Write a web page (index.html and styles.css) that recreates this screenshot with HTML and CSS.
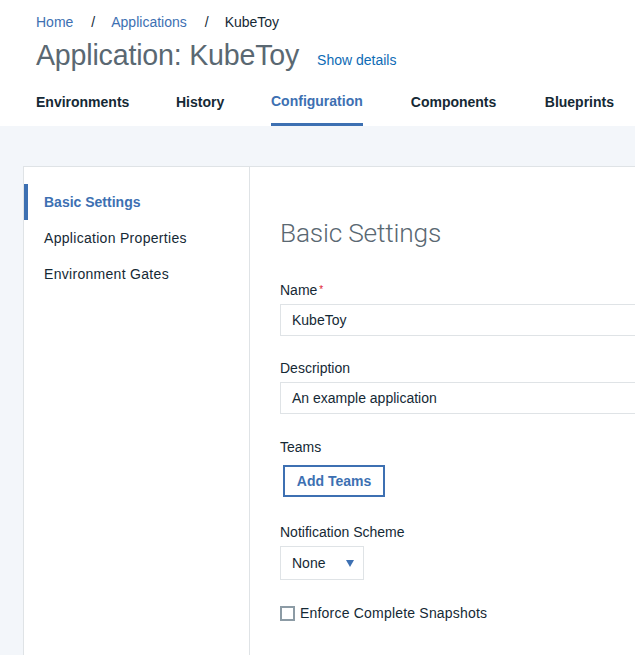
FILE: index.html
```html
<!DOCTYPE html>
<html>
<head>
<meta charset="utf-8">
<link rel="stylesheet" href="styles.css">
</head>
<body>
<header class="header">
  <nav class="crumbs">
    <a class="crumb-link">Home</a><span class="sep">/</span><a class="crumb-link">Applications</a><span class="sep">/</span><span class="crumb-current">KubeToy</span>
  </nav>
  <div class="title-row">
    <h1 class="title">Application: KubeToy</h1>
    <a class="details">Show details</a>
  </div>
  <div class="tabs">
    <span class="tab t1">Environments</span>
    <span class="tab t2">History</span>
    <span class="tab t3 active">Configuration</span>
    <span class="tab t4">Components</span>
    <span class="tab t5">Blueprints</span>
  </div>
</header>
<main class="main">
  <div class="card">
    <aside class="side">
      <div class="side-item active">Basic Settings</div>
      <div class="side-item">Application Properties</div>
      <div class="side-item">Environment Gates</div>
    </aside>
    <section class="content">
      <h2 class="heading">Basic Settings</h2>
      <div class="field">
        <label class="label">Name<span class="req">*</span></label>
        <div class="input">KubeToy</div>
      </div>
      <div class="field">
        <label class="label">Description</label>
        <div class="input">An example application</div>
      </div>
      <div class="field">
        <label class="label">Teams</label>
        <button class="btn">Add Teams</button>
      </div>
      <div class="field">
        <label class="label">Notification Scheme</label>
        <div class="select">None<span class="arrow"></span></div>
      </div>
      <div class="check-row">
        <span class="box"></span><span class="check-label">Enforce Complete Snapshots</span>
      </div>
    </section>
  </div>
</main>
</body>
</html>
```
FILE: styles.css
```css
* { box-sizing: border-box; }
html, body { margin: 0; padding: 0; }
body {
  font-family: "Liberation Sans", Arial, sans-serif;
  color: #152935;
  background: #f3f6fa;
  width: 635px;
  height: 655px;
  overflow: hidden;
}
.header {
  background: #fff;
  height: 126px;
  padding-left: 36px;
  padding-top: 13px;
  display: flex;
  flex-direction: column;
}
.crumbs {
  font-size: 14px;
  line-height: 18px;
  display: flex;
}
.crumb-link { color: #3d70b2; }
.crumb-current { color: #152935; }
.sep { margin: 0 16px 0 18px; color: #152935; }
.title-row {
  display: flex;
  align-items: baseline;
  margin-top: 6px;
}
.title {
  margin: 0;
  font-size: 28.6px;
  font-weight: normal;
  color: #5a6872;
  line-height: 36px;
  letter-spacing: -0.2px;
}
.details {
  color: #0e6bb5;
  font-size: 14px;
  margin-left: 18px;
}
.tabs {
  display: flex;
  margin-top: 21px;
  flex: 1;
}
.tab {
  font-size: 14px;
  font-weight: bold;
  line-height: 16px;
}
.t1 { width: 140px; }
.t2 { width: 95px; }
.t4 { width: 134px; }
.tab.active {
  color: #3d70b2;
  margin-right: 48px;
  border-bottom: 3px solid #3d70b2;
  margin-top: -1px;
}
.main {
  padding: 40px 0 0 23px;
}
.card {
  display: flex;
  background: #fff;
  border: 1px solid #dfe3e6;
  border-right: none;
  height: 520px;
  width: 640px;
}
.side {
  width: 226px;
  border-right: 1px solid #dfe3e6;
  padding-top: 17px;
  flex: none;
}
.side-item {
  font-size: 14px;
  letter-spacing: 0.3px;
  height: 36px;
  line-height: 36px;
  padding-left: 20px;
  color: #152935;
}
.side-item.active {
  color: #3d70b2;
  font-weight: bold;
  letter-spacing: 0;
  border-left: 4px solid #3d70b2;
  padding-left: 16px;
}
.content {
  padding: 49px 0 0 30px;
  flex: 1;
}
.heading {
  margin: 0 0 32px;
  font-family: Roboto, "Liberation Sans", sans-serif;
  font-size: 26.3px;
  font-weight: 300;
  color: #5a6872;
  line-height: 34px;
  letter-spacing: -0.2px;
}
.field { margin-bottom: 24px; }
.field:nth-child(3) { margin-bottom: 25px; }
.label {
  display: block;
  font-size: 14px;
  line-height: 16px;
  margin-bottom: 6px;
  color: #152935;
}
.req {
  color: #e0182d;
  font-size: 10px;
  vertical-align: top;
  margin-left: 2px;
}
.input {
  height: 32px;
  border: 1px solid #dfe3e6;
  padding-left: 11px;
  font-size: 14px;
  line-height: 30px;
  color: #152935;
}
.btn {
  margin-left: 3px;
  margin-top: 4px;
  width: 102px;
  height: 32px;
  border: 2px solid #3d70b2;
  background: #fff;
  color: #3d70b2;
  font-family: inherit;
  font-weight: bold;
  font-size: 14px;
  padding: 0;
}
.field:nth-child(4) { margin-bottom: 27px; }
.field:nth-child(5) { margin-bottom: 25px; }
.select {
  width: 84px;
  height: 34px;
  border: 1px solid #dfe3e6;
  padding-left: 11px;
  font-size: 14px;
  line-height: 32px;
  position: relative;
  color: #152935;
}
.arrow {
  position: absolute;
  left: 65px;
  top: 13px;
  width: 0;
  height: 0;
  border-left: 4px solid transparent;
  border-right: 4px solid transparent;
  border-top: 7px solid #3d70b2;
}
.check-row {
  display: flex;
  align-items: center;
}
.box {
  width: 15px;
  height: 15px;
  border: 2px solid #8c9ba5;
  margin-right: 5px;
}
.check-label {
  font-size: 14px;
  letter-spacing: 0.2px;
  color: #152935;
}
```
